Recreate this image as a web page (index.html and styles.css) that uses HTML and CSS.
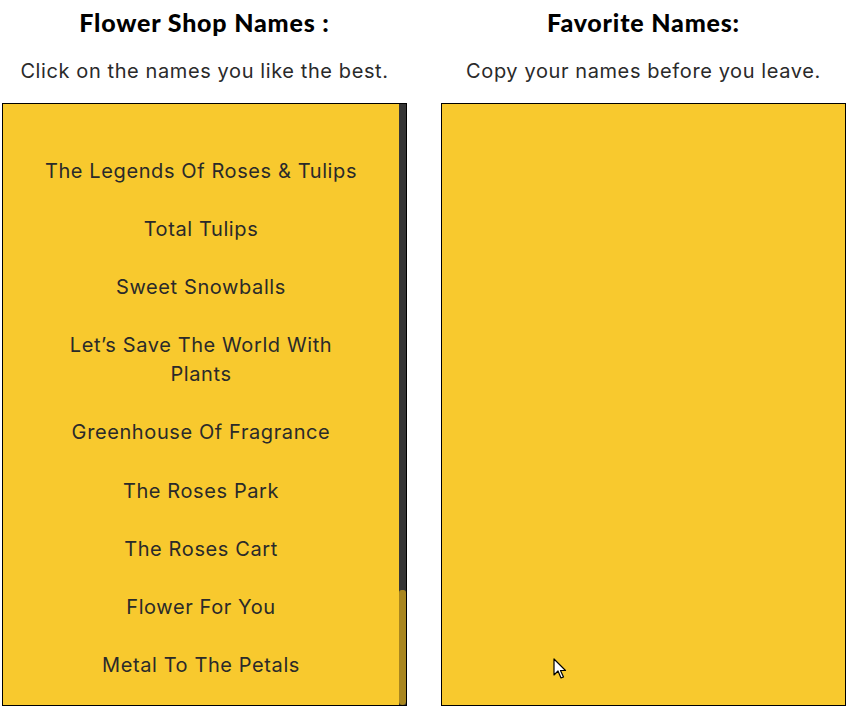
FILE: index.html
```html
<!DOCTYPE html>
<html>
  <head>
    <title>Flower Shop Names</title>
    <link rel="stylesheet" href="styles.css">
  </head>
  <body>
    <div id="board">
      <div class="column">
        <h2 class="title">Flower Shop Names :</h2>
        <p class="hint">Click on the names you like the best.</p>
        <div class="box">
          <ul class="names">
            <li>The Legends Of Roses &amp; Tulips</li>
            <li>Total Tulips</li>
            <li>Sweet Snowballs</li>
            <li>Let’s Save The World With Plants</li>
            <li>Greenhouse Of Fragrance</li>
            <li>The Roses Park</li>
            <li>The Roses Cart</li>
            <li>Flower For You</li>
            <li>Metal To The Petals</li>
          </ul>
          <div class="scroll-track"><div class="scroll-thumb"></div></div>
        </div>
      </div>

      <div class="column">
        <h2 class="title">Favorite Names:</h2>
        <p class="hint">Copy your names before you leave.</p>
        <div class="box favorites">
          <!-- mouse pointer -->
          <svg class="cursor" width="14" height="22" viewBox="0 0 14 22">
            <path d="M1 1 L1 17 L5 13 L8 20 L10.5 19 L7.5 12.5 L12.5 12.5 Z" fill="#fff" stroke="#000" stroke-width="1.2" stroke-linejoin="round"/>
          </svg>
        </div>
      </div>
    </div>
  </body>
</html>
```

FILE: styles.css
```css
body {
  margin: 0;
  background-color: #fff;
  font-family: Inter, "Noto Sans", sans-serif;
  color: #2a2a2a;
}

#board {
  display: grid;
  grid-template-columns: 405px 405px;
  column-gap: 34px;
  padding: 0 2px;
}

.column {
  display: flex;
  flex-direction: column;
  align-items: center;
}

.title {
  margin: 0;
  height: 44px;
  line-height: 44px;
  font-family: Lato, sans-serif;
  font-weight: 900;
  font-size: 25px;
  letter-spacing: 0.8px;
  color: #000;
}

.hint {
  margin: 0;
  padding: 15px 0 20px;
  line-height: 24px;
  font-size: 20px;
  letter-spacing: 0.6px;
}

.box {
  box-sizing: border-box;
  width: 405px;
  height: 603px;
  border: 1px solid #000;
  background-color: #f8c92e;
  display: flex;
  position: relative;
}

.names {
  flex: 1;
  list-style: none;
  margin: 0;
  padding: 38px 40px 0;
}

.names li {
  text-align: center;
  font-size: 20px;
  letter-spacing: 0.6px;
  line-height: 29px;
  padding: 14.6px 0;
  cursor: pointer;
}

.scroll-track {
  width: 7px;
  background-color: #353535;
  display: flex;
  flex-direction: column;
  justify-content: flex-end;
}

.scroll-thumb {
  height: 115px;
  background-color: #a8861f;
  border-radius: 3px 3px 4px 4px;
}

.cursor {
  position: absolute;
  left: 111px;
  top: 554px;
}
```
